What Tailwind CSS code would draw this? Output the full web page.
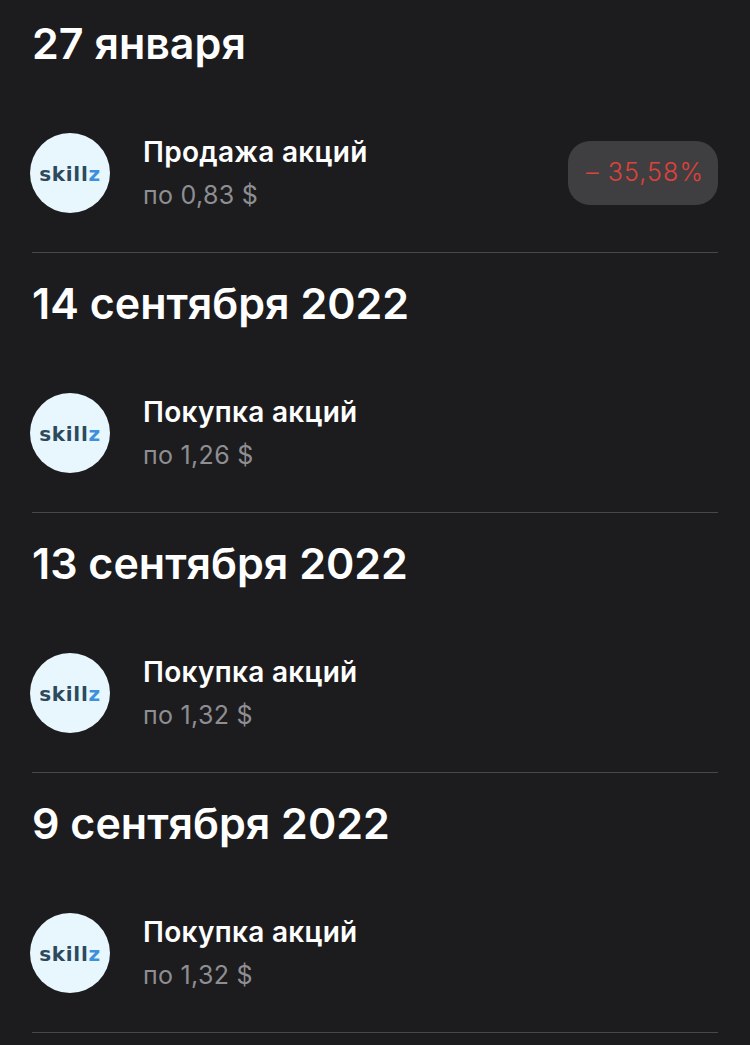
<!DOCTYPE html>
<html lang="ru">
<head>
  <meta charset="UTF-8" />
  <meta name="viewport" content="width=device-width, initial-scale=1.0" />
  <title>Операции</title>
  <script src="https://cdn.jsdelivr.net/npm/@tailwindcss/browser@4"></script>
</head>
<body class="bg-[#1c1c1e] text-white font-[Inter,sans-serif] overflow-hidden">
  <main class="-mt-[7px] h-[1052px] overflow-hidden">

    <!-- 27 января -->
    <section class="h-[260px] pl-[30px] pr-[32px]">
      <h2 class="pl-[2px] h-[101px] leading-[101px] text-[43px] font-semibold">27 января</h2>
      <div class="mt-[39px] flex items-center h-[80px]">
        <div class="w-[80px] h-[80px] pt-[1px] rounded-full bg-[#e8f6fe] flex items-center justify-center shrink-0 font-['DejaVu_Sans',sans-serif] font-bold text-[20px] tracking-[0.7px] text-[#2d4a5c]">skill<span class="text-[#3f8fdc]">z</span></div>
        <div class="ml-[33px] flex-1 pt-[1px]">
          <p class="text-[28px] leading-[42px] font-semibold tracking-[0.3px]">Продажа акций</p>
          <p class="text-[25px] leading-[44px] tracking-[0.3px] text-[#8e8e93]">по 0,83 $</p>
        </div>
        <span class="w-[150px] h-[64px] pl-[4px] rounded-[22px] bg-[#3f3f41] flex items-center justify-center text-[25px] tracking-[1.1px] font-light text-[#e0413a]">– 35,58%</span>
      </div>
      <div class="mt-[39px] ml-[2px] border-t border-[#48484a]"></div>
    </section>

    <!-- 14 сентября 2022 -->
    <section class="h-[260px] pl-[30px] pr-[32px]">
      <h2 class="pl-[2px] h-[101px] leading-[101px] text-[43px] font-semibold">14 сентября 2022</h2>
      <div class="mt-[39px] flex items-center h-[80px]">
        <div class="w-[80px] h-[80px] pt-[1px] rounded-full bg-[#e8f6fe] flex items-center justify-center shrink-0 font-['DejaVu_Sans',sans-serif] font-bold text-[20px] tracking-[0.7px] text-[#2d4a5c]">skill<span class="text-[#3f8fdc]">z</span></div>
        <div class="ml-[33px] flex-1 pt-[1px]">
          <p class="text-[28px] leading-[42px] font-semibold tracking-[0.3px]">Покупка акций</p>
          <p class="text-[25px] leading-[44px] tracking-[0.3px] text-[#8e8e93]">по 1,26 $</p>
        </div>
      </div>
      <div class="mt-[39px] ml-[2px] border-t border-[#48484a]"></div>
    </section>

    <!-- 13 сентября 2022 -->
    <section class="h-[260px] pl-[30px] pr-[32px]">
      <h2 class="pl-[2px] h-[101px] leading-[101px] text-[43px] font-semibold">13 сентября 2022</h2>
      <div class="mt-[39px] flex items-center h-[80px]">
        <div class="w-[80px] h-[80px] pt-[1px] rounded-full bg-[#e8f6fe] flex items-center justify-center shrink-0 font-['DejaVu_Sans',sans-serif] font-bold text-[20px] tracking-[0.7px] text-[#2d4a5c]">skill<span class="text-[#3f8fdc]">z</span></div>
        <div class="ml-[33px] flex-1 pt-[1px]">
          <p class="text-[28px] leading-[42px] font-semibold tracking-[0.3px]">Покупка акций</p>
          <p class="text-[25px] leading-[44px] tracking-[0.3px] text-[#8e8e93]">по 1,32 $</p>
        </div>
      </div>
      <div class="mt-[39px] ml-[2px] border-t border-[#48484a]"></div>
    </section>

    <!-- 9 сентября 2022 -->
    <section class="h-[260px] pl-[30px] pr-[32px]">
      <h2 class="pl-[2px] h-[101px] leading-[101px] text-[43px] font-semibold">9 сентября 2022</h2>
      <div class="mt-[39px] flex items-center h-[80px]">
        <div class="w-[80px] h-[80px] pt-[1px] rounded-full bg-[#e8f6fe] flex items-center justify-center shrink-0 font-['DejaVu_Sans',sans-serif] font-bold text-[20px] tracking-[0.7px] text-[#2d4a5c]">skill<span class="text-[#3f8fdc]">z</span></div>
        <div class="ml-[33px] flex-1 pt-[1px]">
          <p class="text-[28px] leading-[42px] font-semibold tracking-[0.3px]">Покупка акций</p>
          <p class="text-[25px] leading-[44px] tracking-[0.3px] text-[#8e8e93]">по 1,32 $</p>
        </div>
      </div>
      <div class="mt-[39px] ml-[2px] border-t border-[#48484a]"></div>
    </section>

  </main>
</body>
</html>
